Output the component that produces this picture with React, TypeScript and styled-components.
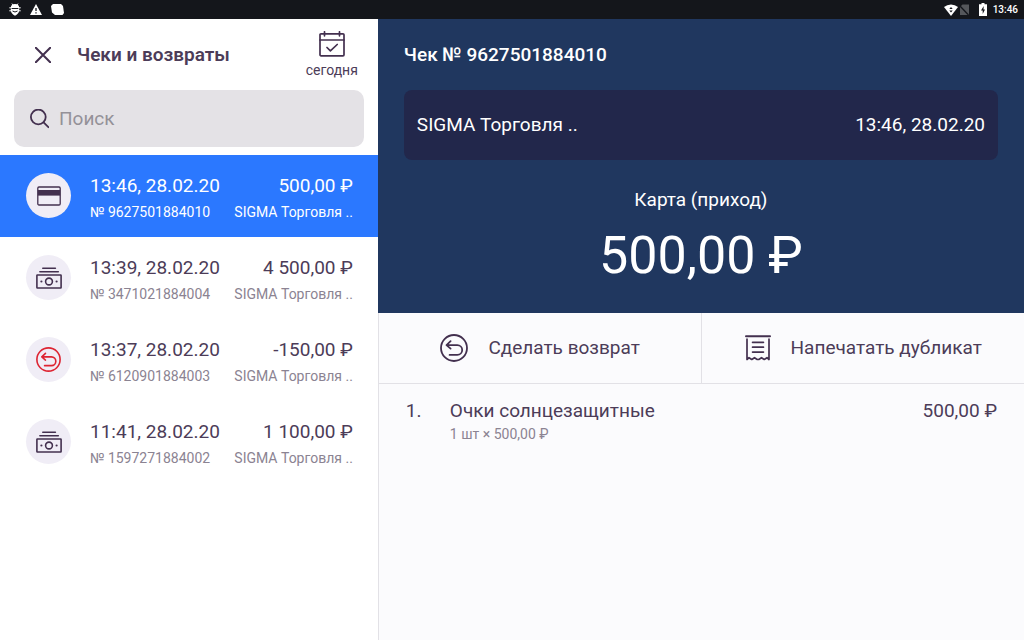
import React from "react";
import styled, { createGlobalStyle } from "styled-components";

const color = {
  ink: "#4c3c58",
  icon: "#43304f",
  muted: "#8b8392",
  blue: "#2b78ff",
  navy: "#20375f",
  navyDark: "#22274b",
  red: "#dd2432",
  line: "#e2e1e6",
};

const GlobalStyle = createGlobalStyle`
  *, *::before, *::after { box-sizing: border-box; }
  body {
    margin: 0;
    font-family: Roboto, "Liberation Sans", sans-serif;
    font-size: 19px;
    line-height: 24px;
    color: ${color.ink};
    background: #fff;
  }
  button, input { font: inherit; color: inherit; }
  button { border: 0; padding: 0; background: none; cursor: pointer; }
  svg { display: block; flex: none; }
`;

const Screen = styled.div`
  display: flex;
  flex-direction: column;
  min-height: 100vh;
`;

const StatusBar = styled.div`
  display: flex;
  align-items: center;
  justify-content: space-between;
  height: 19px;
  padding: 0 6px 0 9px;
  background: #14161b;
  color: #fff;
  font-size: 10px;
  line-height: 19px;
`;

const StatusGroup = styled.div<{ $gap: number }>`
  display: flex;
  align-items: center;
  gap: ${(p) => p.$gap}px;
`;

const StatusTime = styled.time`
  font-weight: 500;
`;

const Panels = styled.div`
  display: grid;
  grid-template-columns: 36.9% minmax(0, 1fr);
  flex: 1;
`;

const Sidebar = styled.aside`
  background: #fff;
`;

const SidebarHeader = styled.header`
  display: flex;
  align-items: center;
  height: 71px;
  padding: 0 20px 0 35px;
`;

const Title = styled.h1`
  flex: 1;
  margin: 0 0 0 26px;
  font-size: 19px;
  font-weight: 600;
`;

const DayButton = styled.button`
  display: flex;
  flex-direction: column;
  align-items: center;
  gap: 5px;
  font-size: 14px;
  line-height: 16px;
`;

const SearchBox = styled.label`
  display: flex;
  align-items: center;
  gap: 10px;
  height: 57px;
  margin: 0 14px 8px;
  padding: 0 16px;
  border-radius: 10px;
  background: #e4e2e6;
`;

const SearchInput = styled.input`
  flex: 1;
  min-width: 0;
  padding: 0;
  border: 0;
  outline: 0;
  background: transparent;
  &::placeholder {
    color: #949198;
    opacity: 1;
  }
`;

const ReceiptList = styled.ul`
  margin: 0;
  padding: 0;
  list-style: none;
`;

const ReceiptButton = styled.button<{ $selected: boolean }>`
  display: flex;
  align-items: center;
  gap: 19px;
  width: 100%;
  height: 82px;
  padding: 0 25px 1px 26px;
  background: ${(p) => (p.$selected ? color.blue : "transparent")};
  color: ${(p) => (p.$selected ? "#fff" : color.ink)};
`;

const IconCircle = styled.span`
  display: flex;
  flex: none;
  align-items: center;
  justify-content: center;
  width: 45px;
  height: 45px;
  border-radius: 50%;
  background: #f0edf6;
  color: ${color.icon};
`;

const ReceiptText = styled.span`
  display: flex;
  flex: 1;
  flex-direction: column;
  gap: 4px;
  min-width: 0;
  padding-top: 5px;
`;

const Line = styled.span`
  display: flex;
  justify-content: space-between;
  white-space: nowrap;
`;

const SubLine = styled(Line)<{ $selected: boolean }>`
  font-size: 14px;
  line-height: 20px;
  color: ${(p) => (p.$selected ? "#fff" : color.muted)};
`;

const Detail = styled.main`
  border-left: 1px solid ${color.line};
  background: #fbfbfd;
`;

const Summary = styled.section`
  display: flex;
  flex-direction: column;
  margin-left: -1px;
  padding: 0 26px 25px;
  background: ${color.navy};
  color: #fff;
`;

const SummaryTitle = styled.h2`
  margin: 0;
  font-size: 19px;
  font-weight: 500;
  line-height: 71px;
`;

const StoreCard = styled.div`
  display: flex;
  align-items: center;
  justify-content: space-between;
  height: 70px;
  padding: 0 13px;
  border-radius: 8px;
  background: ${color.navyDark};
`;

const PaymentKind = styled.p`
  margin: 28px 0 12px;
  text-align: center;
`;

const Total = styled.p`
  margin: 0;
  font-size: 52px;
  line-height: 64px;
  text-align: center;
`;

const Actions = styled.div`
  display: grid;
  grid-template-columns: 1fr 1fr;
  border-bottom: 1px solid ${color.line};
`;

const ActionButton = styled.button`
  display: flex;
  align-items: center;
  justify-content: center;
  gap: 20px;
  height: 70px;
  white-space: nowrap;
  & + & {
    border-left: 1px solid ${color.line};
  }
`;

const Items = styled.table`
  width: 100%;
  margin-top: 15px;
  border-collapse: collapse;
`;

const Cell = styled.td<{ $align?: "right" }>`
  padding: 0;
  vertical-align: top;
  text-align: ${(p) => p.$align ?? "left"};
`;

const IndexCell = styled(Cell)`
  width: 71px;
  padding-left: 27px;
`;

const PriceCell = styled(Cell)`
  padding-right: 27px;
`;

const ItemNote = styled.div`
  font-size: 14px;
  line-height: 22px;
  color: ${color.muted};
`;

const stroke = {
  fill: "none",
  stroke: "currentColor",
  strokeLinecap: "round",
  strokeLinejoin: "round",
} as const;

const CloseIcon = () => (
  <svg width="16" height="16" viewBox="0 0 16 16" {...stroke} stroke={color.icon} strokeWidth="2">
    <path d="M.8 .8l14.4 14.4M15.2 .8L.8 15.2" />
  </svg>
);

const CalendarIcon = () => (
  <svg width="26" height="26" viewBox="0 0 26 26" {...stroke} stroke={color.icon} strokeWidth="1.7">
    <rect x="1" y="2.8" width="24" height="22" rx="1" />
    <path d="M1 9h24M5.5 .8v4M20.5 .8v4M8 16.5l3.4 3.3 6.8-6.3" />
  </svg>
);

const SearchIcon = () => (
  <svg width="19" height="20" viewBox="0 0 19 20" {...stroke} stroke={color.icon} strokeWidth="1.8">
    <circle cx="8.3" cy="8" r="7.4" />
    <path d="M13.6 13.3l4.8 4.9" />
  </svg>
);

const CardIcon = () => (
  <svg width="24" height="20" viewBox="0 0 24 20" {...stroke} strokeWidth="1.3">
    <rect x=".8" y="1" width="22.4" height="18" rx="1.2" />
    <path d="M.8 4h22.4v5.6H.8z" fill="currentColor" stroke="none" />
  </svg>
);

const CashIcon = () => (
  <svg width="26" height="22" viewBox="0 0 26 22" {...stroke} strokeWidth="1.6">
    <path d="M6.8 1.2h12.6M3.9 4.7h18.4" />
    <rect x=".9" y="8" width="24.2" height="13" rx=".5" />
    <circle cx="13" cy="14.5" r="3.4" />
    <circle cx="5.4" cy="14.5" r="1.1" fill="currentColor" stroke="none" />
    <circle cx="20.6" cy="14.5" r="1.1" fill="currentColor" stroke="none" />
  </svg>
);

const ReturnIcon = ({ size, tint }: { size: number; tint: string }) => (
  <svg width={size} height={size} viewBox="0 0 28 28" {...stroke} stroke={tint} strokeWidth="1.8">
    <circle cx="14" cy="14" r="13" />
    <path d="M10.6 7.2L6.5 11.1l4.1 3.5M6.5 11.1h10.8a4.9 4.9 0 0 1 0 9.8H9.6" />
  </svg>
);

const PrintIcon = () => (
  <svg width="26" height="26" viewBox="0 0 26 26" {...stroke} stroke={color.icon} strokeWidth="1.7">
    <path d="M1 1.2h24" strokeWidth="2" />
    <path d="M2 4.2v20.3l2-1.8 2.75 1.8 2.75-1.8 2.75 1.8h1.5l2.75-1.8 2.75 1.8L22 22.7l2 1.8V4.2" />
    <path d="M7.6 7.3h10.8M7.6 12.2h10.8M7.6 17.1h10.8" strokeWidth="1.8" />
  </svg>
);

const BugIcon = () => (
  <svg width="12" height="13" viewBox="0 0 12 13">
    <path d="M1.8 4.8a4.2 3.8 0 0 1 8.4 0v2.7q-.5 3.5-4.2 5.3q-3.7-1.8-4.2-5.3z" fill="#fff" />
    <path d="M3 .6l1.2 1.6M9 .6L7.8 2.2M.3 4.8h2M9.7 4.8h2M.3 7.8h2M9.7 7.8h2" stroke="#fff" strokeWidth="1" />
    <path d="M2.6 5.5h6.8M3.5 8q2.5 2 5 0" fill="none" stroke="#14161b" strokeWidth="1" />
  </svg>
);

const WarningIcon = () => (
  <svg width="12" height="11" viewBox="0 0 12 11">
    <path d="M6 0l6 11H0z" fill="#fff" />
    <path d="M6 4v3M6 8.2v1.3" stroke="#14161b" strokeWidth="1.3" />
  </svg>
);

const NoticeIcon = () => (
  <svg width="13" height="11" viewBox="0 0 13 11">
    <path d="M2 0h8l2 2 1 7-1.5 2H4L1 8.5 0 2z" fill="#fff" />
  </svg>
);

const WifiIcon = () => (
  <svg width="14" height="12" viewBox="0 0 14 12">
    <path d="M0 3a11 11 0 0 1 14 0L7 12z" fill="#fff" />
    <path d="M5.3 5L7 3l1.7 2zM5.3 6.5h3.4L7 8.5z" fill="#14161b" />
  </svg>
);

const NoSimIcon = () => (
  <svg width="10" height="12" viewBox="0 0 10 12">
    <path d="M3.5 .5H10V11H1V3z" fill="#55575b" />
    <path d="M0 1l10 10.5" stroke="#14161b" strokeWidth="1.4" />
  </svg>
);

const BatteryIcon = () => (
  <svg width="8" height="13" viewBox="0 0 8 13">
    <path d="M2.5 0h3v1.2H8V13H0V1.2h2.5z" fill="#fff" />
    <path d="M4.7 3L2 7.5h1.7V11L6 6.5H4.5z" fill="#14161b" />
  </svg>
);

type Kind = "card" | "cash" | "return";

const receipts: { time: string; number: string; amount: string; kind: Kind }[] = [
  { time: "13:46, 28.02.20", number: "9627501884010", amount: "500,00 ₽", kind: "card" },
  { time: "13:39, 28.02.20", number: "3471021884004", amount: "4 500,00 ₽", kind: "cash" },
  { time: "13:37, 28.02.20", number: "6120901884003", amount: "-150,00 ₽", kind: "return" },
  { time: "11:41, 28.02.20", number: "1597271884002", amount: "1 100,00 ₽", kind: "cash" },
];

const store = "SIGMA Торговля ..";

const KindIcon = ({ kind }: { kind: Kind }) => {
  if (kind === "card") return <CardIcon />;
  if (kind === "cash") return <CashIcon />;
  return <ReturnIcon size={25} tint={color.red} />;
};

export default function App() {
  const [selected, setSelected] = React.useState(0);
  const current = receipts[selected];

  return (
    <>
      <GlobalStyle />
      <Screen>
        <StatusBar>
          <StatusGroup $gap={9}>
            <BugIcon />
            <WarningIcon />
            <NoticeIcon />
          </StatusGroup>
          <StatusGroup $gap={10}>
            <StatusGroup $gap={1}>
              <WifiIcon />
              <NoSimIcon />
            </StatusGroup>
            <StatusGroup $gap={6}>
              <BatteryIcon />
              <StatusTime>13:46</StatusTime>
            </StatusGroup>
          </StatusGroup>
        </StatusBar>
        <Panels>
          <Sidebar>
            <SidebarHeader>
              <button type="button" aria-label="Закрыть">
                <CloseIcon />
              </button>
              <Title>Чеки и возвраты</Title>
              <DayButton type="button">
                <CalendarIcon />
                сегодня
              </DayButton>
            </SidebarHeader>
            <SearchBox>
              <SearchIcon />
              <SearchInput type="text" placeholder="Поиск" aria-label="Поиск" />
            </SearchBox>
            <ReceiptList>
              {receipts.map((r, i) => (
                <li key={r.number}>
                  <ReceiptButton
                    type="button"
                    $selected={i === selected}
                    aria-pressed={i === selected}
                    onClick={() => setSelected(i)}
                  >
                    <IconCircle>
                      <KindIcon kind={r.kind} />
                    </IconCircle>
                    <ReceiptText>
                      <Line>
                        <span>{r.time}</span>
                        <span>{r.amount}</span>
                      </Line>
                      <SubLine $selected={i === selected}>
                        <span>№ {r.number}</span>
                        <span>{store}</span>
                      </SubLine>
                    </ReceiptText>
                  </ReceiptButton>
                </li>
              ))}
            </ReceiptList>
          </Sidebar>
          <Detail>
            <Summary>
              <SummaryTitle>Чек № {current.number}</SummaryTitle>
              <StoreCard>
                <span>{store}</span>
                <span>{current.time}</span>
              </StoreCard>
              <PaymentKind>Карта (приход)</PaymentKind>
              <Total>{current.amount}</Total>
            </Summary>
            <Actions>
              <ActionButton type="button">
                <ReturnIcon size={28} tint={color.icon} />
                Сделать возврат
              </ActionButton>
              <ActionButton type="button">
                <PrintIcon />
                Напечатать дубликат
              </ActionButton>
            </Actions>
            <Items>
              <tbody>
                <tr>
                  <IndexCell>1.</IndexCell>
                  <Cell>
                    Очки солнцезащитные
                    <ItemNote>1 шт × 500,00 ₽</ItemNote>
                  </Cell>
                  <PriceCell $align="right">500,00 ₽</PriceCell>
                </tr>
              </tbody>
            </Items>
          </Detail>
        </Panels>
      </Screen>
    </>
  );
}
